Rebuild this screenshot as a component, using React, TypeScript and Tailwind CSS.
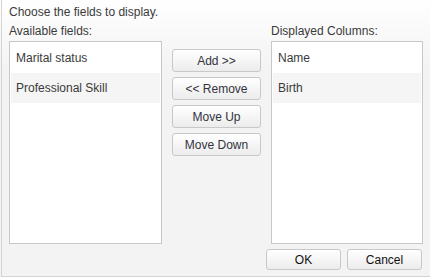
import React from "react";

const font = { fontFamily: '"Liberation Sans", Arial, sans-serif' };

function Btn({ label, w }: { label: string; w: string }) {
  return (
    <div
      className={`${w} h-[23px] flex items-center justify-center rounded-[3px] border border-[#c8c8c8] bg-gradient-to-b from-[#ffffff] to-[#ececec] text-[12px] text-[#333340] leading-none`}
    >
      {label}
    </div>
  );
}

function ListBox({ items, w }: { items: string[]; w: string }) {
  return (
    <div className={`${w} h-[203px] border border-[#c8c8c8] bg-white p-[1px]`}>
      {items.map((it, i) => (
        <div
          key={it}
          className={`h-[30px] flex items-center pl-[5px] text-[12px] text-[#3a3a3a] ${
            i % 2 === 1 ? "bg-[#f5f5f5]" : ""
          }`}
        >
          {it}
        </div>
      ))}
    </div>
  );
}

export default function App() {
  return (
    <div
      className="w-[430px] h-[277px] bg-gradient-to-b from-[#ffffff] to-[#f3f3f3] to-[25%] pl-[1px]"
      style={font}
    >
      <div className="h-full border-l border-b border-[#d4d4d4] pl-[7px] pr-[8px] pt-[5px] flex flex-col">
        <div className="h-[14px] leading-[14px] text-[12px] text-[#3a3a3a]">
          Choose the fields to display.
        </div>
        <div className="flex mt-[5px]">
          <div className="flex flex-col">
            <div className="h-[14px] leading-[14px] text-[12px] text-[#3a3a3a] mb-[3px]">
              Available fields:
            </div>
            <ListBox items={["Marital status", "Professional Skill"]} w="w-[153px]" />
          </div>
          <div className="ml-[10px] mt-[25px] flex flex-col gap-[5px]">
            <Btn label="Add >>" w="w-[89px]" />
            <Btn label="<< Remove" w="w-[89px]" />
            <Btn label="Move Up" w="w-[89px]" />
            <Btn label="Move Down" w="w-[89px]" />
          </div>
          <div className="ml-[10px] flex flex-col">
            <div className="h-[14px] leading-[14px] text-[12px] text-[#3a3a3a] mb-[3px]">
              Displayed Columns:
            </div>
            <ListBox items={["Name", "Birth"]} w="w-[152px]" />
          </div>
        </div>
        <div className="flex justify-end gap-[6px] mt-[5px]">
          <div className="w-[75px] h-[21px] flex items-center justify-center rounded-[3px] border border-[#c8c8c8] bg-gradient-to-b from-[#ffffff] to-[#ececec] text-[12px] text-[#111]">
            OK
          </div>
          <div className="w-[75px] h-[21px] flex items-center justify-center rounded-[3px] border border-[#c8c8c8] bg-gradient-to-b from-[#ffffff] to-[#ececec] text-[12px] text-[#111]">
            Cancel
          </div>
        </div>
      </div>
    </div>
  );
}
